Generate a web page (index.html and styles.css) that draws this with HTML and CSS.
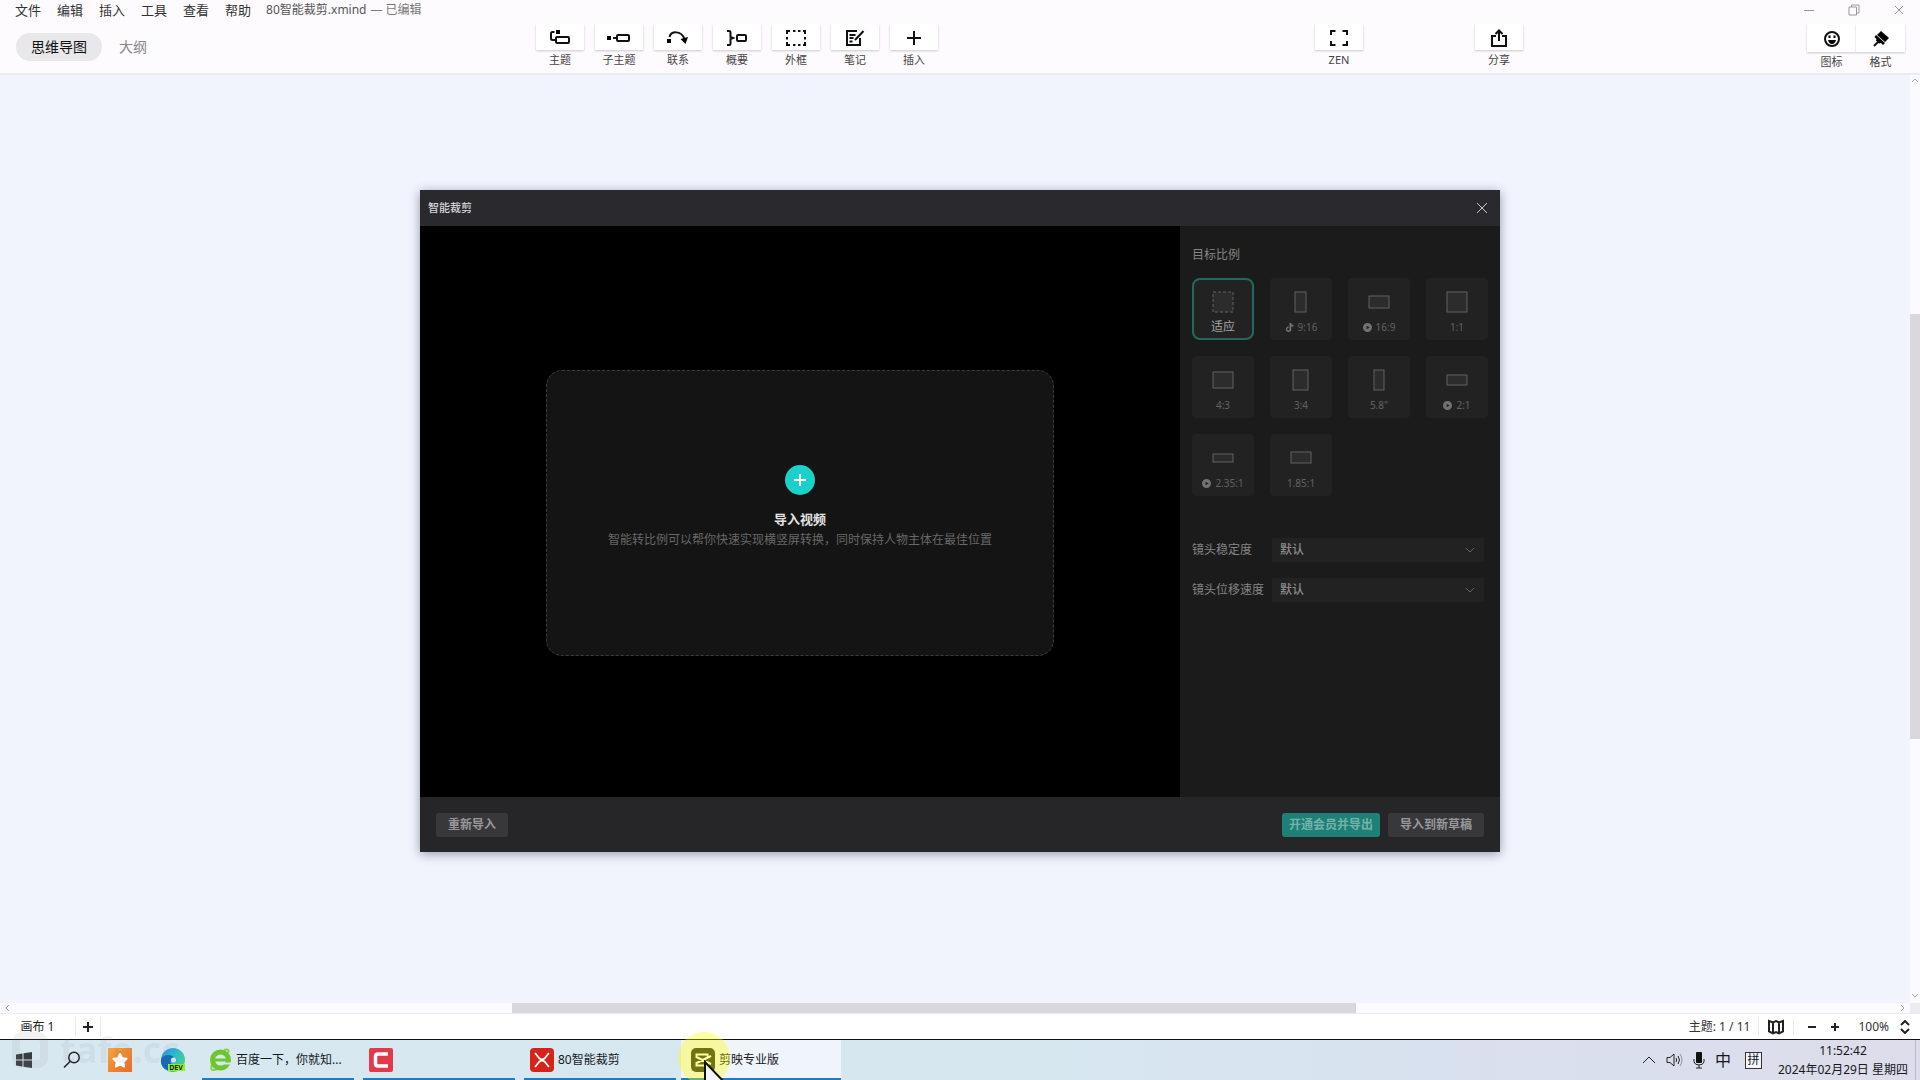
FILE: index.html
```html
<!DOCTYPE html>
<html lang="zh-CN">
<head>
<meta charset="utf-8">
<title>80智能裁剪.xmind</title>
<link rel="stylesheet" href="styles.css">
</head>
<body>
<header class="titlebar">
  <nav class="menu">
    <button>文件</button><button>编辑</button><button>插入</button><button>工具</button><button>查看</button><button>帮助</button>
  </nav>
  <span class="doc-name">80智能裁剪.xmind</span>
  <span class="doc-state">— 已编辑</span>
  <div class="window-controls">
    <button aria-label="最小化"><svg width="10" height="10" viewBox="0 0 10 10"><path d="M0 5.500h10"/></svg></button>
    <button aria-label="还原"><svg width="12" height="12" viewBox="0 0 12 12"><path d="M1 3h7.500v8H1zM3.500 3V1h7.500v8H8.500"/></svg></button>
    <button aria-label="关闭"><svg width="10" height="10" viewBox="0 0 10 10"><path d="M1 1l8 8M9 1l-8 8"/></svg></button>
  </div>
</header>

<div class="toolbar">
  <div class="views">
    <button class="view view-on">思维导图</button>
    <button class="view">大纲</button>
  </div>
  <div class="tools tools-main">
    <button class="tool"><span class="tool-box"><svg width="22" height="18" viewBox="0 0 22 18"><path class="ln" d="M5.500 3H3.500Q2 3 2 4.500V9.500Q2 11 3.500 11H6"/><path d="M7 1h4v4H7z"/><rect class="ln" x="7" y="8" width="13" height="6" rx="1"/></svg></span>主题</button>
    <button class="tool"><span class="tool-box"><svg width="24" height="18" viewBox="0 0 24 18"><path d="M0 7h4v4H0z"/><path class="ln" d="M6 9h4"/><rect class="ln" x="10" y="6" width="12" height="6" rx="1"/></svg></span>子主题</button>
    <button class="tool"><span class="tool-box"><svg width="22" height="18" viewBox="0 0 22 18"><path d="M0 10h4v4H0z"/><path class="ln" d="M2.500 8C4 2 14 1 17.500 10"/><path d="M13.500 10l7.500-2-2.500 7z"/></svg></span>联系</button>
    <button class="tool"><span class="tool-box"><svg width="22" height="18" viewBox="0 0 22 18"><path class="ln" d="M1 2h2q1.500 0 1.500 1.500V8L7 9l-2.500 1v4.500Q4.500 16 3 16H1"/><rect class="ln" x="11" y="6" width="9" height="6" rx="1"/></svg></span>概要</button>
    <button class="tool"><span class="tool-box"><svg width="22" height="18" viewBox="0 0 22 18"><path class="ln" d="M2 5V2h3M8 2h2.500M13 2h2.500M18 2h2v3M20 8v2.500M20 13v3h-2M15.500 16H13M10.500 16H8M5 16H2v-3M2 10.500V8"/></svg></span>外框</button>
    <button class="tool"><span class="tool-box"><svg width="22" height="18" viewBox="0 0 22 18"><path class="ln" d="M13 2H3v14h13V9"/><path class="ln" d="M5.500 6h6M5.500 9h4M5.500 12.500h3M11 11l8.500-9"/></svg></span>笔记</button>
    <button class="tool"><span class="tool-box"><svg width="18" height="18" viewBox="0 0 18 18"><path class="ln" d="M9 2v14M2 9h14"/></svg></span>插入</button>
  </div>
  <div class="tools tools-mid">
    <button class="tool"><span class="tool-box"><svg width="20" height="18" viewBox="0 0 20 18"><path class="ln" d="M2 6V2h4.500M13.500 2H18v4M18 12v4h-4.500M6.500 16H2v-4"/></svg></span>ZEN</button>
    <button class="tool"><span class="tool-box"><svg width="18" height="18" viewBox="0 0 18 18"><path class="ln" d="M6 7H2v10h14V7h-4M9 12V2M5.500 5L9 1.500 12.500 5"/></svg></span>分享</button>
  </div>
  <div class="tools tools-side">
    <button class="tool"><span class="tool-box"><svg width="18" height="18" viewBox="0 0 18 18"><circle class="ln" cx="9" cy="9" r="7"/><path d="M5.500 5.500h2v2.500h-2zM10.500 5.500h2v2.500h-2zM5 10h8q-1 4-4 4t-4-4z"/></svg></span>图标</button>
    <button class="tool"><span class="tool-box"><svg width="18" height="18" viewBox="0 0 18 18"><path d="M9 1l8 7-4 4-8-7z"/><path d="M4 5l9 8-2 2-2-2-2 .500-3-3 .500-1.500L2.500 7z"/><path class="ln" d="M7 11l-5 5"/></svg></span>格式</button>
  </div>
</div>

<main class="workspace">
  <div class="canvas"></div>
  <div class="track track-v"><svg class="arrow" width="8" height="6" viewBox="0 0 8 6"><path d="M1 5l3-3 3 3"/></svg><i class="thumb"></i><svg class="arrow" width="8" height="6" viewBox="0 0 8 6"><path d="M1 1l3 3 3-3"/></svg></div>
  <div class="track track-h"><svg class="arrow" width="6" height="8" viewBox="0 0 6 8"><path d="M5 1L2 4l3 3"/></svg><i class="thumb"></i><svg class="arrow" width="6" height="8" viewBox="0 0 6 8"><path d="M1 1l3 3-3 3"/></svg></div>
  <div class="corner"></div>

  <section class="dialog" role="dialog" aria-labelledby="dialog-title">
    <header class="dialog-head">
      <h1 id="dialog-title">智能裁剪</h1>
      <button class="close" aria-label="关闭"><svg width="12" height="12" viewBox="0 0 12 12"><path d="M1 1l10 10M11 1L1 11"/></svg></button>
    </header>
    <div class="dialog-body">
      <div class="preview">
        <button class="dropzone">
          <svg width="30" height="30" viewBox="0 0 30 30"><circle cx="15" cy="15" r="15" fill="#1bd2ca"/><path d="M15 9v12M9 15h12" stroke="#fff" stroke-width="2"/></svg>
          <strong>导入视频</strong>
          <span>智能转比例可以帮你快速实现横竖屏转换，同时保持人物主体在最佳位置</span>
        </button>
      </div>
      <aside class="settings">
        <h2>目标比例</h2>
        <div class="ratios">
          <button class="ratio ratio-on"><svg viewBox="0 0 24 24"><rect x="2" y="2" width="20" height="20" stroke-dasharray="3 2"/></svg><span>适应</span></button>
          <button class="ratio"><svg viewBox="0 0 24 24"><rect x="6" y="2" width="11" height="20"/></svg><span><svg class="mark" viewBox="0 0 10 10"><path d="M5 0h2q0 2 2.500 2.500v1.500Q8 4 7 3.500V7A3 3 0 1 1 4 4v1.700A1.300 1.300 0 1 0 5 7z"/></svg>9:16</span></button>
          <button class="ratio"><svg viewBox="0 0 24 24"><rect x="2" y="6" width="20" height="12"/></svg><span><svg class="mark" viewBox="0 0 10 10"><path fill-rule="evenodd" d="M5 0a5 5 0 1 0 0 10A5 5 0 1 0 5 0M4 3l3.500 2L4 7z"/></svg>16:9</span></button>
          <button class="ratio"><svg viewBox="0 0 24 24"><rect x="2" y="2" width="20" height="20"/></svg><span>1:1</span></button>
          <button class="ratio"><svg viewBox="0 0 24 24"><rect x="2" y="4" width="20" height="16"/></svg><span>4:3</span></button>
          <button class="ratio"><svg viewBox="0 0 24 24"><rect x="4" y="2" width="15" height="20"/></svg><span>3:4</span></button>
          <button class="ratio"><svg viewBox="0 0 24 24"><rect x="7" y="2" width="10" height="20"/></svg><span>5.8"</span></button>
          <button class="ratio"><svg viewBox="0 0 24 24"><rect x="2" y="7" width="20" height="10"/></svg><span><svg class="mark" viewBox="0 0 10 10"><path fill-rule="evenodd" d="M5 0a5 5 0 1 0 0 10A5 5 0 1 0 5 0M4 3l3.500 2L4 7z"/></svg>2:1</span></button>
          <button class="ratio"><svg viewBox="0 0 24 24"><rect x="2" y="8" width="20" height="8"/></svg><span><svg class="mark" viewBox="0 0 10 10"><path fill-rule="evenodd" d="M5 0a5 5 0 1 0 0 10A5 5 0 1 0 5 0M4 3l3.500 2L4 7z"/></svg>2.35:1</span></button>
          <button class="ratio"><svg viewBox="0 0 24 24"><rect x="2" y="6" width="20" height="11"/></svg><span>1.85:1</span></button>
        </div>
        <div class="field">
          <label for="stability">镜头稳定度</label>
          <div class="select"><select id="stability"><option>默认</option></select><svg width="10" height="6" viewBox="0 0 10 6"><path d="M1 1l4 4 4-4"/></svg></div>
        </div>
        <div class="field">
          <label for="speed">镜头位移速度</label>
          <div class="select"><select id="speed"><option>默认</option></select><svg width="10" height="6" viewBox="0 0 10 6"><path d="M1 1l4 4 4-4"/></svg></div>
        </div>
      </aside>
    </div>
    <footer class="dialog-foot">
      <button class="btn btn-again">重新导入</button>
      <button class="btn btn-primary">开通会员并导出</button>
      <button class="btn">导入到新草稿</button>
    </footer>
  </section>
</main>

<footer class="status">
  <button class="sheet">画布 1</button>
  <button class="sheet-add" aria-label="新建画布"><svg width="12" height="12" viewBox="0 0 12 12"><path d="M6 1v10M1 6h10"/></svg></button>
  <span class="topics">主题: 1 / 11</span>
  <button class="map" aria-label="导航图"><svg width="18" height="16" viewBox="0 0 18 16"><path d="M2 2l4 1.500L9 2l3 1.500L16 2v10.500L12 14.500 9 13l-3 1.500-4-2zM6 3.500v11M12 3.500v11"/></svg></button>
  <button class="zoom" aria-label="缩小"><svg width="10" height="10" viewBox="0 0 10 10"><path d="M1 5h8"/></svg></button>
  <button class="zoom" aria-label="放大"><svg width="10" height="10" viewBox="0 0 10 10"><path d="M1 5h8M5 1v8"/></svg></button>
  <span class="percent">100%</span>
  <button class="stepper" aria-label="缩放比例"><svg width="10" height="14" viewBox="0 0 10 14"><path d="M1 5l4-4 4 4M1 9l4 4 4-4"/></svg></button>
</footer>

<div class="taskbar">
  <button class="pin" aria-label="开始"><svg width="16" height="16" viewBox="0 0 16 16"><path fill="#3a3d40" d="M0 2.500L6.500 1.500V7.500H0zM7.500 1.300L16 0V7.500H7.500zM0 8.500H6.500V14.500L0 13.500zM7.500 8.500H16V16L7.500 14.700z"/></svg></button>
  <button class="pin" aria-label="搜索"><svg width="18" height="18" viewBox="0 0 18 18" fill="none" stroke="#222" stroke-width="1.500"><circle cx="11" cy="6.500" r="5.200"/><path d="M7.300 10.200L1 16.500"/></svg></button>
  <button class="pin" aria-label="收藏"><svg width="24" height="24" viewBox="0 0 24 24"><defs><linearGradient id="g-star" x1="0" y1="0" x2="1" y2="1"><stop offset="0" stop-color="#f6a53a"/><stop offset="1" stop-color="#ea6a2c"/></linearGradient></defs><path fill="url(#g-star)" d="M0 0h24v24H0z"/><path fill="#fff" stroke="#fff" stroke-linejoin="round" stroke-width="2" d="M12 6l2 4.200 4.600.6-3.300 3.200.8 4.500L12 16.300 7.900 18.500l.8-4.500-3.300-3.200 4.600-.6z"/></svg></button>
  <button class="pin pin-wide" aria-label="Edge Dev"><svg width="26" height="24" viewBox="0 0 26 24"><defs><linearGradient id="g-edge" x1="0" y1="0" x2="1" y2="1"><stop offset="0" stop-color="#2a8fe0"/><stop offset=".5" stop-color="#2fc1c4"/><stop offset="1" stop-color="#66d84a"/></linearGradient></defs><circle cx="13" cy="12" r="12" fill="url(#g-edge)"/><path fill="#1668b8" d="M1 12C2 6 13 5 15 11c-4-2-6 2-3 6 1 3 4 5 6 5C9 26 0 20 1 12z"/><circle cx="13.500" cy="12" r="2.500" fill="#dcecf6"/><path fill="#8ff01f" d="M8 16h17v7H8z"/><text x="16" y="22" class="dev">DEV</text></svg></button>
  <div class="tasks">
    <button class="task"><svg width="24" height="24" viewBox="0 0 24 24"><path fill="none" stroke="#8bd04a" stroke-width="2" d="M20 5Q22 0 16 2M5 14q-5 11 4 7"/><circle cx="12.500" cy="12" r="8" fill="none" stroke="#6cc62c" stroke-width="5"/><path fill="#6cc62c" d="M6 10.500h14v3H6z"/><path fill="#d8e6f1" d="M14 14.500h9v2h-9z"/></svg>百度一下，你就知...</button>
    <button class="task" aria-label="Camtasia"><svg width="24" height="24" viewBox="0 0 24 24"><rect width="24" height="24" rx="2" fill="#e23a4a"/><path fill="none" stroke="#fff" stroke-width="3.500" d="M19 6H9Q6.500 6 6.500 8.500v7Q6.500 18 9 18h10"/></svg></button>
    <button class="task"><svg width="24" height="24" viewBox="0 0 24 24"><rect width="24" height="24" rx="4" fill="#d8231b"/><path fill="none" stroke="#fff" stroke-width="1.800" d="M5 5l4 5q3 3 6 0l4-5M5 19l4-5q3-3 6 0l4 5"/></svg>80智能裁剪</button>
    <button class="task task-on"><svg width="24" height="24" viewBox="0 0 24 24"><rect width="24" height="24" rx="5" fill="#22251c"/><path fill="none" stroke="#fff" stroke-width="2" d="M16.500 8.500V6.500H5.500V9L20 16M16.500 15.500v2H5.500V15L20 8"/></svg>剪映专业版</button>
  </div>
  <div class="tray">
    <svg width="14" height="10" viewBox="0 0 14 10"><path d="M1 8l6-6 6 6"/></svg>
    <svg width="17" height="16" viewBox="0 0 17 16"><path d="M1 5.500h3l4-3.500v12L4 10.500H1zM10 6q1.500 2 0 4M12 4q3 4 0 8"/><path opacity=".4" d="M14 2q4 6 0 12"/></svg>
    <svg width="12" height="18" viewBox="0 0 12 18"><rect class="solid" x="3" y="1" width="6" height="11" rx="1"/><path d="M1 8v3q1 3 5 3t5-3V8M6 14v3M3 17h6"/></svg>
    <span class="ime">中</span>
    <span class="pinyin">拼</span>
    <div class="clock"><time>11:52:42</time><time>2024年02月29日 星期四</time></div>
  </div>
  <div class="watermark" aria-hidden="true"><i></i>tafe.cc</div>
  <div class="pointer"><svg width="24" height="36" viewBox="0 0 24 36"><path fill="#f4f4fc" stroke="#111" stroke-width="2" d="M1 2v28l6-6 5 11 5-2-5-10h9z"/></svg></div>
</div>
</body>
</html>
```
FILE: styles.css
```css
* { box-sizing: border-box; }

body {
  margin: 0;
  height: 100vh;
  display: flex;
  flex-direction: column;
  overflow: hidden;
  background: #fdfbfe;
  color: #333;
  font: 13px/20px "Noto Sans", "Noto Sans CJK SC", sans-serif;
}

button, select {
  border: 0;
  padding: 0;
  margin: 0;
  background: none;
  color: inherit;
  font: inherit;
}

svg { display: block; flex: none; }
h1, h2 { margin: 0; font-weight: 400; }

/* Title bar */
.titlebar {
  display: flex;
  height: 24px;
  padding: 0 16px 4px 15px;
  align-items: center;
}
.menu { display: flex; gap: 16px; margin-right: 15px; }
.doc-name { font-size: 12px; color: #555; }
.doc-state { font-size: 12px; margin-left: 4px; color: #777; }
.window-controls { display: flex; align-items: center; gap: 34px; margin-left: auto; }
.window-controls path { fill: none; stroke: #999; }

/* Toolbar */
.toolbar {
  display: grid;
  grid-template-columns: 536px 779px 492px 1fr;
  height: 51px;
  align-items: start;
  border-bottom: 2px solid #ebebf1;
}
.views { display: flex; gap: 2px; padding: 9px 0 0 16px; }
.view {
  height: 28px;
  padding: 0 15px;
  border-radius: 14px;
  font-size: 14px;
  color: #888;
}
.view-on { background: #e8e7ea; color: #111; }
.tools { display: flex; }
.tools-main { gap: 11px; }
.tools-mid { gap: 112px; }
.tool {
  display: flex;
  flex-direction: column;
  width: 48px;
  font-size: 11px;
  line-height: 18px;
  color: #444;
  text-align: center;
}
.tool-box {
  display: flex;
  height: 26px;
  margin-bottom: 1px;
  padding-top: 2px;
  align-items: center;
  justify-content: center;
  background: #fff;
  box-shadow: 0 1px 2px #c9c8cf;
  clip-path: inset(0 -4px -4px);
}
.tool .ln { fill: none; stroke: #111; stroke-width: 2; }
.tools-side .tool-box { height: 28px; }
.tools-side .tool { width: 49px; }

/* Canvas and its scrollbars */
.workspace {
  position: relative;
  flex: 1;
  min-height: 0;
  display: grid;
  grid-template: 1fr 10px / 1fr 10px;
}
.canvas { background: #f1f4fd; }
.track { display: grid; align-items: center; justify-items: center; background: #fbfafe; }
.track-v { grid-template-rows: 239fr 425fr 264fr; }
.track-h { grid-template-columns: 512fr 844fr 554fr; }
.thumb { width: 100%; height: 100%; background: #dad8de; }
.arrow path { fill: none; stroke: #aaa; }
.track-v .arrow:first-child { align-self: start; margin-top: 2px; }
.track-v .arrow:last-child { align-self: end; margin-bottom: 4px; }
.track-h .arrow:first-child { justify-self: start; margin-left: 4px; }
.track-h .arrow:last-child { justify-self: end; margin-right: 4px; }
.corner { background: #ececf0; }

/* Crop dialog */
.dialog {
  position: absolute;
  top: 115px;
  left: calc(50vw - 28.125vw);
  width: 56.25vw;
  background: #262628;
  color: #858585;
  font-size: 12px;
  box-shadow: 0 2px 10px rgba(40, 45, 70, .45);
}
.dialog-head {
  display: flex;
  height: 36px;
  padding: 0 12px 0 8px;
  align-items: center;
  justify-content: space-between;
  background: #29292e;
}
.dialog-head h1 { font-size: 11px; font-weight: 500; color: #d6d6d8; }
.close path { fill: none; stroke: #ccc; stroke-width: 1; }
.dialog-body { display: grid; grid-template-columns: 1fr 320px; min-height: 571px; }
.preview { display: flex; align-items: center; justify-content: center; padding-top: 2px; background: #000; }
.dropzone {
  display: flex;
  flex-direction: column;
  align-items: center;
  width: 508px;
  max-width: 90%;
  height: 286px;
  padding-top: 94px;
  border: 1px dashed #3c3c3c;
  border-radius: 16px;
  background: #141414;
}
.dropzone strong { margin-top: 13px; font-size: 13px; font-weight: 700; line-height: 22px; color: #e2e2e2; }
.dropzone span { color: #686868; }
.settings { padding: 19px 12px; background: #1b1b1c; }
.settings h2 { font-size: 12px; line-height: 20px; color: #858585; }
.ratios { display: grid; grid-template-columns: repeat(4, 62px); gap: 16px; margin: 13px 0 42px; }
.ratio {
  display: flex;
  flex-direction: column;
  height: 62px;
  padding-top: 12px;
  align-items: center;
  border-radius: 4px;
  background: #222223;
  color: #626262;
  font-size: 10px;
  line-height: 16px;
}
.ratio svg { width: 24px; height: 24px; }
.ratio rect { fill: #2c2c2d; stroke: #606060; stroke-width: 1; }
.ratio span { display: flex; align-items: center; gap: 4px; margin-top: 5px; }
.ratio .mark { width: 9px; height: 9px; fill: #727272; }
.ratio-on { padding-top: 10px; border: 2px solid #23695f; border-radius: 8px; color: #a5a5a5; font-size: 12px; }
.field { display: flex; align-items: center; margin-bottom: 16px; }
.field label { width: 80px; }
.select { display: grid; width: 212px; align-items: center; background: #222223; }
.select select, .select svg { grid-area: 1 / 1; }
.select select { appearance: none; height: 24px; padding: 0 8px; color: #8c8c8c; font-weight: 500; }
.select svg { justify-self: end; margin-right: 9px; pointer-events: none; }
.select path { fill: none; stroke: #666; }
.dialog-foot { display: flex; height: 55px; padding: 1px 16px 0; align-items: center; gap: 8px; }
.btn {
  height: 24px;
  padding: 0 12px;
  border-radius: 3px;
  background: #38383b;
  color: #98989b;
  font-weight: 700;
}
.btn-again { margin-right: auto; }
.btn-primary { padding: 0 7px; background: #1f8077; color: #74b3ad; }

/* Sheet bar */
.status {
  display: flex;
  height: 27px;
  align-items: center;
  padding: 0 10px 0 0;
  border-top: 1px solid #eceaf0;
  border-bottom: 1px solid #111;
  background: #fff;
  font-size: 12px;
}
.status path { fill: none; stroke: #222; stroke-width: 2; }
.sheet { width: 76px; border-right: 1px solid #eceaf0; color: #222; }
.sheet-add { display: grid; width: 25px; height: 20px; place-items: center; border-right: 1px solid #eceaf0; }
.topics { margin-left: auto; padding-right: 8px; border-right: 1px solid #eceaf0; }
.map { padding: 0 8px; border-right: 1px solid #eceaf0; }
.zoom { width: 23px; display: grid; justify-content: end; }
.percent { margin: 0 11px 0 18px; }

/* Windows taskbar */
.taskbar {
  position: relative;
  display: flex;
  height: 40px;
  background: linear-gradient(90deg, #d7e8f1 0%, #d7e7f0 55%, #d8e1ef 75%, #dddcea 100%);
  color: #16181c;
  font-size: 12px;
}
.pin { display: grid; width: 48px; place-items: center; }
.pin-wide { width: 58px; }
.dev { font: 700 7px "Open Sans", sans-serif; text-anchor: middle; fill: #123; }
.tasks { display: flex; gap: 9px; }
.task {
  display: flex;
  width: 152px;
  padding: 2px 0 0 6px;
  gap: 4px;
  align-items: center;
  border-bottom: 2px solid #1d7dc2;
}
.task-on { width: 160px; margin-left: -4px; padding-left: 10px; background: #f0f4fb; }
.tray { display: flex; align-items: center; margin-left: auto; margin-right: 4px; padding-right: 7px; border-right: 1px solid #b9bac6; }
.tray svg { margin-right: 10px; }
.tray path { fill: none; stroke: #222; stroke-width: 1; }
.tray .solid { fill: #111; }
.ime { font-size: 16px; margin-right: 14px; }
.pinyin { width: 17px; height: 17px; margin-right: 16px; border: 1px solid #333; background: #f4f4f8; line-height: 14px; text-align: center; }
.clock { display: flex; flex-direction: column; align-items: center; line-height: 19px; }

/* Overlays */
.watermark {
  position: absolute;
  left: 12px;
  bottom: 12px;
  display: flex;
  align-items: center;
  gap: 12px;
  color: rgba(125, 125, 135, .1);
  font: 700 36px/36px "Open Sans", sans-serif;
  pointer-events: none;
}
.watermark i { width: 36px; height: 36px; border: 8px solid rgba(125, 125, 135, .1); border-radius: 10px; }
.pointer {
  position: absolute;
  left: 678px;
  bottom: -4px;
  width: 52px;
  height: 52px;
  border-radius: 50%;
  background: rgba(255, 255, 0, .36);
}
.pointer svg { position: absolute; left: 26px; top: 28px; }
```
